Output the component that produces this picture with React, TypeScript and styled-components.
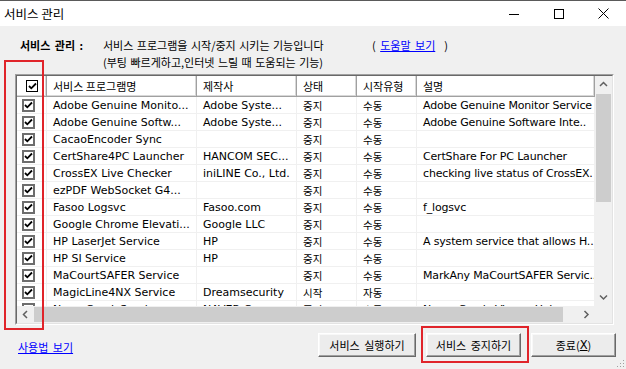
import React from "react";
import styled, { createGlobalStyle } from "styled-components";

const KO = `"Noto Sans CJK KR", "DejaVu Sans", sans-serif`;
const LATIN = `"DejaVu Sans", "Noto Sans CJK KR", sans-serif`;

const GlobalStyle = createGlobalStyle`
  html, body { margin: 0; padding: 0; background: #f0f0f0; overflow: hidden; }
  body { font-family: ${LATIN}; color: #000; }
  * { box-sizing: border-box; }
`;

const Window = styled.div`
  position: relative;
  width: 626px;
  height: 369px;
  background: #f0f0f0;
  display: flex;
  flex-direction: column;
  overflow: hidden;
`;

const TitleBar = styled.div`
  height: 26px;
  flex: none;
  background: #fff;
  border-top: 1px solid #5a5a5a;
  display: flex;
  align-items: center;
`;

const Title = styled.div`
  flex: 1;
  padding-left: 4px;
  font: 12.5px ${KO};
  color: #000;
`;

const CaptionButton = styled.div`
  width: 45px;
  height: 100%;
  display: flex;
  align-items: center;
  justify-content: center;
`;

const Body = styled.div`
  flex: 1;
  display: flex;
  flex-direction: column;
  padding: 10px 10px 0 15px;
`;

const Info = styled.div`
  display: grid;
  grid-template-columns: 83px 269px auto;
  grid-auto-rows: 17px;
  align-items: center;
  margin-left: 5px;
  font: 11px ${KO};
  word-spacing: 1px;
  white-space: nowrap;
`;

const InfoLabel = styled.span`
  font-weight: bold;
  word-spacing: 2px;
`;

const Link = styled.a`
  color: #0000ff;
  text-decoration: underline;
  cursor: pointer;
`;

const HelpText = styled.span`
  word-spacing: 2px;
`;

const TableFrame = styled.div`
  margin-top: 4px;
  width: 599px;
  height: 251px;
  flex: none;
  border: 1px solid;
  border-color: #a0a0a0 #fff #fff #a0a0a0;
`;

const TableInner = styled.div`
  width: 100%;
  height: 100%;
  border: 1px solid;
  border-color: #696969 #e3e3e3 #e3e3e3 #696969;
  background: #fff;
  display: grid;
  grid-template-columns: 1fr 17px;
  grid-template-rows: 1fr 17px;
`;

const Viewport = styled.div`
  overflow: hidden;
  display: flex;
  flex-direction: column;
  min-width: 0;
  min-height: 0;
`;

const COLS = "30px 150px 100px 60px 60px 1fr";

const HeaderRow = styled.div`
  display: grid;
  grid-template-columns: ${COLS};
  height: 21px;
  flex: none;
`;

const HeaderCell = styled.div<{ $pad?: number }>`
  display: flex;
  align-items: center;
  padding-left: ${(p) => p.$pad ?? 6}px;
  background: #fff;
  border-right: 1px solid #a0a0a0;
  border-bottom: 1px solid #a0a0a0;
  box-shadow: inset -1px -1px #d8d8d8, inset 1px 1px #fff;
  font: 11px ${KO};
  white-space: nowrap;
  overflow: hidden;
`;

const Row = styled.div`
  display: grid;
  grid-template-columns: ${COLS};
  height: 17px;
  flex: none;
  border-bottom: 1px solid #f0f0f0;
`;

const Cell = styled.div<{ $ko?: boolean; $pad?: number; $tight?: boolean }>`
  display: flex;
  align-items: center;
  padding-left: ${(p) => p.$pad ?? 6}px;
  border-right: 1px solid #f0f0f0;
  white-space: nowrap;
  overflow: hidden;
  font: ${(p) => (p.$ko ? `10.5px ${KO}` : `11px ${LATIN}`)};
  letter-spacing: ${(p) => (p.$tight ? "-0.17px" : "0")};
  color: #000;
`;

const CheckBox = styled.div<{ $header?: boolean }>`
  width: ${(p) => (p.$header ? 12 : 13)}px;
  height: ${(p) => (p.$header ? 12 : 13)}px;
  border: ${(p) => (p.$header ? "1px solid #000" : "2px solid #6d6d6d")};
  background: #fff;
  display: flex;
  align-items: center;
  justify-content: center;
`;

const VScroll = styled.div`
  background: #f0f0f0;
  display: flex;
  flex-direction: column;
`;

const HScroll = styled.div`
  background: #f0f0f0;
  display: flex;
  flex-direction: row;
  min-width: 0;
`;

const Corner = styled.div`
  background: #f0f0f0;
`;

const ArrowBox = styled.div`
  width: 17px;
  height: 17px;
  flex: none;
  display: flex;
  align-items: center;
  justify-content: center;
`;

const Spacer = styled.div`
  flex: 1;
`;

const VThumb = styled.div`
  margin: 1px 1px 0 1px;
  height: 108px;
  background: #cdcdcd;
`;

const HThumb = styled.div`
  margin: 1px 0 1px 0;
  width: 529px;
  background: #cdcdcd;
`;

const BottomRow = styled.div`
  margin-top: 8px;
  display: flex;
  align-items: center;
  padding-left: 3px;
  height: 24px;
`;

const UsageLink = styled(Link)`
  font: 11px ${KO};
  word-spacing: 2px;
  margin-top: 4px;
`;

const ButtonGroup = styled.div`
  margin-left: auto;
  display: flex;
  gap: 10px;
`;

const Button = styled.div<{ $w: number }>`
  width: ${(p) => p.$w}px;
  height: 24px;
  display: flex;
  align-items: center;
  justify-content: center;
  background: #ececec;
  border: 1px solid;
  border-color: #fff #696969 #696969 #fff;
  box-shadow: inset -1px -1px #a0a0a0, inset 1px 1px #f8f8f8;
  font: 11px ${KO};
  word-spacing: 2px;
  color: #000;
`;

const Underline = styled.span`
  text-decoration: underline;
  font-family: ${LATIN};
  font-size: 11.5px;
`;

const Highlight = styled.div<{ $x: number; $y: number; $w: number; $h: number }>`
  position: absolute;
  left: ${(p) => p.$x}px;
  top: ${(p) => p.$y}px;
  width: ${(p) => p.$w}px;
  height: ${(p) => p.$h}px;
  border: 2px solid #e0242a;
  pointer-events: none;
`;

const Grip = styled.svg`
  position: absolute;
  right: 1px;
  bottom: 1px;
`;

const Check = ({ header }: { header?: boolean }) => (
  <CheckBox $header={header}>
    <svg width="9" height="8" viewBox="0 0 9 8">
      <polyline points="1,4 3.3,6.3 8,1.5" fill="none" stroke="#000" strokeWidth="1.8" />
    </svg>
  </CheckBox>
);

const Chevron = ({ dir }: { dir: "up" | "down" | "left" | "right" }) => {
  const pts = {
    up: "1,5 4.5,1.5 8,5",
    down: "1,1.5 4.5,5 8,1.5",
    left: "5,1 1.5,4.5 5,8",
    right: "1.5,1 5,4.5 1.5,8",
  }[dir];
  const vertical = dir === "up" || dir === "down";
  return (
    <svg width={vertical ? 9 : 7} height={vertical ? 7 : 9} viewBox={vertical ? "0 0 9 7" : "0 0 7 9"}>
      <polyline points={pts} fill="none" stroke="#606060" strokeWidth="1.5" />
    </svg>
  );
};

type Svc = { name: string; maker: string; state: string; type: string; desc: string };

const services: Svc[] = [
  { name: "Adobe Genuine Monito...", maker: "Adobe Syste...", state: "중지", type: "수동", desc: "Adobe Genuine Monitor Service" },
  { name: "Adobe Genuine Softw...", maker: "Adobe Syste...", state: "중지", type: "수동", desc: "Adobe Genuine Software Inte.." },
  { name: "CacaoEncoder Sync", maker: "", state: "중지", type: "수동", desc: "" },
  { name: "CertShare4PC Launcher", maker: "HANCOM SEC...", state: "중지", type: "수동", desc: "CertShare For PC Launcher" },
  { name: "CrossEX Live Checker", maker: "iniLINE Co., Ltd.", state: "중지", type: "수동", desc: "checking live status of CrossEX." },
  { name: "ezPDF WebSocket G4...", maker: "", state: "중지", type: "수동", desc: "" },
  { name: "Fasoo Logsvc", maker: "Fasoo.com", state: "중지", type: "수동", desc: "f_logsvc" },
  { name: "Google Chrome Elevati...", maker: "Google LLC", state: "중지", type: "수동", desc: "" },
  { name: "HP LaserJet Service", maker: "HP", state: "중지", type: "수동", desc: "A system service that allows H.." },
  { name: "HP SI Service", maker: "HP", state: "중지", type: "수동", desc: "" },
  { name: "MaCourtSAFER Service", maker: "", state: "중지", type: "수동", desc: "MarkAny MaCourtSAFER Servic.." },
  { name: "MagicLine4NX Service", maker: "Dreamsecurity", state: "시작", type: "자동", desc: "" },
  { name: "NaverComicService", maker: "NAVER Corp.", state: "중지", type: "수동", desc: "Naver Comic Viewer Helper" },
];

export default function App() {
  return (
    <Window>
      <GlobalStyle />
      <TitleBar>
        <Title>서비스 관리</Title>
        <CaptionButton>
          <svg width="10" height="10" viewBox="0 0 10 10">
            <line x1="0" y1="5.5" x2="10" y2="5.5" stroke="#000" strokeWidth="1" />
          </svg>
        </CaptionButton>
        <CaptionButton>
          <svg width="10" height="10" viewBox="0 0 10 10">
            <rect x="0.5" y="0.5" width="9" height="9" fill="none" stroke="#000" strokeWidth="1" />
          </svg>
        </CaptionButton>
        <CaptionButton>
          <svg width="11" height="11" viewBox="0 0 11 11">
            <line x1="0.5" y1="0.5" x2="10.5" y2="10.5" stroke="#000" strokeWidth="1" />
            <line x1="10.5" y1="0.5" x2="0.5" y2="10.5" stroke="#000" strokeWidth="1" />
          </svg>
        </CaptionButton>
      </TitleBar>
      <Body>
        <Info>
          <InfoLabel>서비스 관리 :</InfoLabel>
          <span>서비스 프로그램을 시작/중지 시키는 기능입니다</span>
          <HelpText>
            ( <Link>도움말 보기</Link> &nbsp;)
          </HelpText>
          <span />
          <span>(부팅 빠르게하고,인터넷 느릴 때 도움되는 기능)</span>
          <span />
        </Info>
        <TableFrame>
          <TableInner>
            <Viewport>
              <HeaderRow>
                <HeaderCell $pad={9}>
                  <Check header />
                </HeaderCell>
                <HeaderCell>서비스 프로그램명</HeaderCell>
                <HeaderCell>제작사</HeaderCell>
                <HeaderCell>상태</HeaderCell>
                <HeaderCell>시작유형</HeaderCell>
                <HeaderCell>설명</HeaderCell>
              </HeaderRow>
              {services.map((s) => (
                <Row key={s.name}>
                  <Cell $pad={5}>
                    <Check />
                  </Cell>
                  <Cell>{s.name}</Cell>
                  <Cell>{s.maker}</Cell>
                  <Cell $ko>{s.state}</Cell>
                  <Cell $ko>{s.type}</Cell>
                  <Cell $tight>{s.desc}</Cell>
                </Row>
              ))}
            </Viewport>
            <VScroll>
              <ArrowBox>
                <Chevron dir="up" />
              </ArrowBox>
              <VThumb />
              <Spacer />
              <ArrowBox>
                <Chevron dir="down" />
              </ArrowBox>
            </VScroll>
            <HScroll>
              <ArrowBox>
                <Chevron dir="left" />
              </ArrowBox>
              <HThumb />
              <Spacer />
              <ArrowBox>
                <Chevron dir="right" />
              </ArrowBox>
            </HScroll>
            <Corner />
          </TableInner>
        </TableFrame>
        <BottomRow>
          <UsageLink>사용법 보기</UsageLink>
          <ButtonGroup>
            <Button $w={98}>서비스 실행하기</Button>
            <Button $w={95}>서비스 중지하기</Button>
            <Button $w={85}>
              종료(<Underline>X</Underline>)
            </Button>
          </ButtonGroup>
        </BottomRow>
      </Body>
      <Highlight $x={4} $y={60} $w={40} $h={270} />
      <Highlight $x={421} $y={326} $w={108} $h={37} />
      <Grip width="10" height="10" viewBox="0 0 10 10">
        {[
          [8, 2], [8, 5], [5, 5], [8, 8], [5, 8], [2, 8],
        ].map(([x, y]) => (
          <rect key={`${x}-${y}`} x={x} y={y} width="1" height="1" fill="#a0a0a0" />
        ))}
      </Grip>
    </Window>
  );
}
